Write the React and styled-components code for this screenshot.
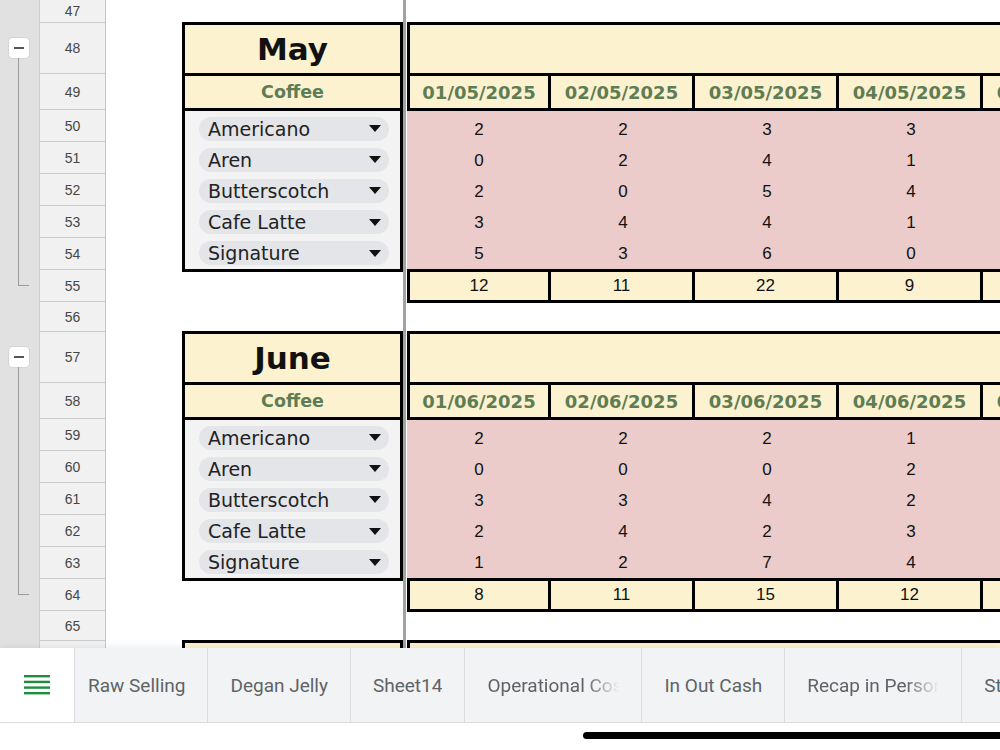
import React from "react";
import styled, { createGlobalStyle } from "styled-components";

const GlobalStyle = createGlobalStyle`
  html, body {
    margin: 0;
    padding: 0;
    background: #ffffff;
  }
  * {
    box-sizing: border-box;
  }
`;

const YELLOW = "#fcf2cf";
const PINK = "#ebcccb";
const GREEN = "#5e7d55";
const LINE = "3px solid #000";
const TITLE_FONT = `"DejaVu Sans", "Noto Sans", sans-serif`;

const Screen = styled.div`
  width: 1000px;
  height: 750px;
  overflow: hidden;
  display: flex;
  flex-direction: column;
  background: #fff;
`;

const SheetArea = styled.div`
  height: 648px;
  display: flex;
  overflow: hidden;
`;

/* left lane with the row group toggles */
const Gutter = styled.div`
  width: 40px;
  flex: none;
  background: #e1e1e1;
  padding-top: 38px;
  display: flex;
  flex-direction: column;
  border-right: 1px solid #cfcfcf;
`;

const Group = styled.div`
  display: flex;
  flex-direction: column;
  margin-bottom: 61px;
`;

const Toggle = styled.div`
  width: 20px;
  height: 20px;
  margin-left: 9px;
  background: #fff;
  border-radius: 4px;
  box-shadow: 0 0 0 1px #d4d4d4;
  display: flex;
  align-items: center;
  justify-content: center;

  &::before {
    content: "";
    width: 10px;
    height: 1.5px;
    background: #555;
  }
`;

const Bracket = styled.div`
  height: 228px;
  width: 11px;
  margin-left: 18px;
  border-left: 1.5px solid #9c9c9c;
  border-bottom: 1.5px solid #9c9c9c;
`;

const RowHeaders = styled.div`
  width: 66px;
  flex: none;
  background: #f1f1f1;
  border-right: 1px solid #c7c7c7;
  display: flex;
  flex-direction: column;
`;

const RowNum = styled.div`
  height: ${(p) => p.$h}px;
  flex: none;
  border-bottom: 1px solid #cacaca;
  display: flex;
  align-items: center;
  justify-content: center;
  font-family: "Liberation Sans", Arial, sans-serif;
  font-size: 14px;
  color: #474747;
`;

const FrozenPane = styled.div`
  width: 297px;
  flex: none;
  padding: 22px 0 0 76px;
  display: flex;
  flex-direction: column;
`;

const FreezeBar = styled.div`
  width: 4px;
  flex: none;
  background: #a2a2a2;
  border-right: 1px solid #fff;
`;

const ScrollPane = styled.div`
  flex: 1;
  overflow: hidden;
  padding-top: 22px;
  display: flex;
  flex-direction: column;
`;

/* frozen side of a month */
const Card = styled.div`
  width: 221px;
  height: 250px;
  flex: none;
  border: ${LINE};
  margin-bottom: 59px;
  display: flex;
  flex-direction: column;
`;

const MonthTitle = styled.div`
  height: 51px;
  flex: none;
  background: ${YELLOW};
  border-bottom: ${LINE};
  display: flex;
  align-items: center;
  justify-content: center;
  font-family: ${TITLE_FONT};
  font-weight: 700;
  font-size: 31px;
  color: #111;
`;

const CategoryHead = styled.div`
  height: 35px;
  flex: none;
  background: ${YELLOW};
  border-bottom: ${LINE};
  display: flex;
  align-items: center;
  justify-content: center;
  font-family: ${TITLE_FONT};
  font-weight: 700;
  font-size: 17.5px;
  color: ${GREEN};
`;

const ItemList = styled.div`
  flex: 1;
  background: #f3f3f3;
  padding-top: 2px;
  display: flex;
  flex-direction: column;
`;

const ItemRow = styled.div`
  height: 31.2px;
  flex: none;
  display: flex;
  align-items: center;
  padding: 0 11px 0 14px;
`;

const Chip = styled.div`
  flex: 1;
  height: 24px;
  border-radius: 12px;
  background: #e4e5e9;
  display: flex;
  align-items: center;
  justify-content: space-between;
  padding: 0 8px 0 9px;
  font-family: ${TITLE_FONT};
  font-size: 19px;
  color: #222;
`;

/* scrolling side of a month */
const Section = styled.div`
  width: 900px;
  flex: none;
  margin-bottom: 28px;
  display: flex;
  flex-direction: column;
`;

const Band = styled.div`
  height: 54px;
  flex: none;
  background: ${YELLOW};
  border-top: ${LINE};
  border-bottom: ${LINE};
  border-left: ${LINE};
`;

const CellRow = styled.div`
  display: flex;
  flex: none;
  border-left: ${LINE};
`;

const DateCell = styled.div`
  width: ${(p) => (p.$first ? 141 : 144)}px;
  height: 35px;
  flex: none;
  background: ${YELLOW};
  border-right: ${LINE};
  border-bottom: ${LINE};
  display: flex;
  align-items: center;
  justify-content: center;
  font-family: ${TITLE_FONT};
  font-weight: 700;
  font-size: 18px;
  color: ${GREEN};
  white-space: nowrap;
`;

const DataBlock = styled.div`
  height: 161px;
  flex: none;
  background: ${PINK};
  border-bottom: ${LINE};
  padding-top: 3px;
  display: flex;
  flex-direction: column;
`;

const DataRow = styled.div`
  height: 31.2px;
  flex: none;
  display: grid;
  grid-template-columns: repeat(5, 144px);
`;

const Num = styled.div`
  display: flex;
  align-items: center;
  justify-content: center;
  font-family: "Liberation Sans", Arial, sans-serif;
  font-size: 17px;
  color: #111;
`;

const TotalCell = styled(Num)`
  width: ${(p) => (p.$first ? 141 : 144)}px;
  height: 31px;
  flex: none;
  background: ${YELLOW};
  border-right: ${LINE};
  border-bottom: ${LINE};
`;

/* sheet tabs */
const TabBar = styled.div`
  height: 75px;
  flex: none;
  display: flex;
  background: #f1f3f4;
  border-bottom: 1px solid #dadce0;
  box-shadow: 0 -2px 6px rgba(0, 0, 0, 0.06);
  position: relative;
  overflow: hidden;
`;

const MenuButton = styled.div`
  width: 75px;
  flex: none;
  background: #fff;
  border-right: 1px solid #dadce0;
  display: flex;
  align-items: center;
  justify-content: center;
`;

const Tab = styled.div`
  flex: none;
  display: flex;
  align-items: center;
  padding: 0 22px 0 ${(p) => (p.$cut ? 13 : 22)}px;
  border-right: 1px solid #dadce0;
  font-family: Roboto, "Liberation Sans", sans-serif;
  font-size: 19px;
  color: #5f6368;
  white-space: nowrap;
`;

const TabLabel = styled.span`
  display: block;
  overflow: hidden;
  max-width: ${(p) => (p.$clip ? "132px" : "none")};
  -webkit-mask-image: ${(p) =>
    p.$clip ? "linear-gradient(90deg, #000 75%, transparent 100%)" : "none"};
  mask-image: ${(p) =>
    p.$clip ? "linear-gradient(90deg, #000 75%, transparent 100%)" : "none"};
`;

const HomeArea = styled.div`
  flex: 1;
  background: #fff;
  padding: 9px 0 0 583px;
`;

const HomeBar = styled.div`
  width: 440px;
  height: 7px;
  border-radius: 4px;
  background: #000;
`;

const rowHeights = [
  [47, 23], [48, 51], [49, 36], [50, 32], [51, 32], [52, 32], [53, 32], [54, 32], [55, 32], [56, 30],
  [57, 51], [58, 36], [59, 32], [60, 32], [61, 32], [62, 32], [63, 32], [64, 32], [65, 30], [66, 40],
];

const items = ["Americano", "Aren", "Butterscotch", "Cafe Latte", "Signature"];

const months = [
  {
    name: "May",
    mm: "05",
    data: [
      [2, 2, 3, 3, 1],
      [0, 2, 4, 1, 2],
      [2, 0, 5, 4, 3],
      [3, 4, 4, 1, 2],
      [5, 3, 6, 0, 4],
    ],
  },
  {
    name: "June",
    mm: "06",
    data: [
      [2, 2, 2, 1, 3],
      [0, 0, 0, 2, 1],
      [3, 3, 4, 2, 2],
      [2, 4, 2, 3, 1],
      [1, 2, 7, 4, 2],
    ],
  },
];

const tabs = [
  { label: "Raw Selling", cut: true },
  { label: "Degan Jelly" },
  { label: "Sheet14" },
  { label: "Operational Costs", clip: true },
  { label: "In Out Cash" },
  { label: "Recap in Personal", clip: true },
  { label: "Stock" },
];

const Caret = () => (
  <svg width="12" height="7" viewBox="0 0 12 7">
    <path d="M0 0h12L6 7z" fill="#111" />
  </svg>
);

const SheetsMenu = () => (
  <svg width="26" height="20" viewBox="0 0 26 20">
    {[1, 6.7, 12.4, 18].map((y) => (
      <rect key={y} x="0" y={y - 1} width="26" height="2.4" fill="#1e8e3e" />
    ))}
  </svg>
);

const sumCol = (data, c) => data.reduce((s, r) => s + r[c], 0);

export default function App() {
  return (
    <Screen>
      <GlobalStyle />
      <SheetArea>
        <Gutter>
          {months.map((m) => (
            <Group key={m.name}>
              <Toggle />
              <Bracket />
            </Group>
          ))}
        </Gutter>

        <RowHeaders>
          {rowHeights.map(([n, h]) => (
            <RowNum key={n} $h={h}>
              {n < 66 ? n : ""}
            </RowNum>
          ))}
        </RowHeaders>

        <FrozenPane>
          {months.map((m) => (
            <Card key={m.name}>
              <MonthTitle>{m.name}</MonthTitle>
              <CategoryHead>Coffee</CategoryHead>
              <ItemList>
                {items.map((it) => (
                  <ItemRow key={it}>
                    <Chip>
                      {it}
                      <Caret />
                    </Chip>
                  </ItemRow>
                ))}
              </ItemList>
            </Card>
          ))}
          {/* top of the next month, below the tab bar */}
          <Card>
            <MonthTitle />
          </Card>
        </FrozenPane>

        <FreezeBar />

        <ScrollPane>
          {months.map((m) => (
            <Section key={m.name}>
              <Band />
              <CellRow>
                {[1, 2, 3, 4, 5].map((d) => (
                  <DateCell key={d} $first={d === 1}>
                    {`0${d}/${m.mm}/2025`}
                  </DateCell>
                ))}
              </CellRow>
              <DataBlock>
                {m.data.map((row, i) => (
                  <DataRow key={i}>
                    {row.map((v, j) => (
                      <Num key={j}>{v}</Num>
                    ))}
                  </DataRow>
                ))}
              </DataBlock>
              <CellRow>
                {[0, 1, 2, 3, 4].map((c) => (
                  <TotalCell key={c} $first={c === 0}>
                    {sumCol(m.data, c)}
                  </TotalCell>
                ))}
              </CellRow>
            </Section>
          ))}
          <Section>
            <Band />
          </Section>
        </ScrollPane>
      </SheetArea>

      <TabBar>
        <MenuButton>
          <SheetsMenu />
        </MenuButton>
        {tabs.map((t) => (
          <Tab key={t.label} $cut={t.cut}>
            <TabLabel $clip={t.clip}>{t.label}</TabLabel>
          </Tab>
        ))}
      </TabBar>

      <HomeArea>
        <HomeBar />
      </HomeArea>
    </Screen>
  );
}
